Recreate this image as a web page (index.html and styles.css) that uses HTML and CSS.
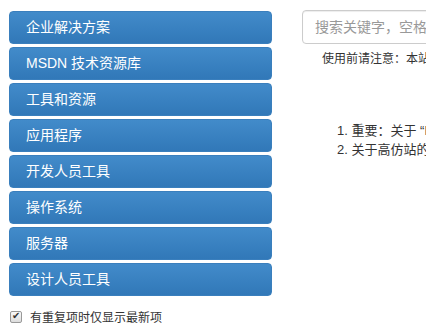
FILE: index.html
```html
<!DOCTYPE html>
<html lang="zh-CN">
<head>
    <meta charset="UTF-8">
    <title>MSDN 资源</title>
    <link rel="stylesheet" href="styles.css">
</head>
<body>
    <div class="page">
        <aside class="sidebar">
            <ul class="category-list">
                <li><a href="#" class="category">企业解决方案</a></li>
                <li><a href="#" class="category">MSDN 技术资源库</a></li>
                <li><a href="#" class="category">工具和资源</a></li>
                <li><a href="#" class="category">应用程序</a></li>
                <li><a href="#" class="category">开发人员工具</a></li>
                <li><a href="#" class="category">操作系统</a></li>
                <li><a href="#" class="category">服务器</a></li>
                <li><a href="#" class="category">设计人员工具</a></li>
            </ul>
            <label class="latest-only">
                <input type="checkbox" checked>
                <span>有重复项时仅显示最新项</span>
            </label>
        </aside>

        <main class="content">
            <input type="text" class="search" placeholder="搜索关键字，空格隔开多个关键字">
            <p class="notice">使用前请注意：本站资源均来自于官方原版，请校验文件信息后使用</p>
            <ol class="news">
                <li>重要：关于 “MSDN 镜像文件” 的说明</li>
                <li>关于高仿站的声明</li>
            </ol>
        </main>
    </div>
</body>
</html>
```

FILE: styles.css
```css
* {
    margin: 0;
    padding: 0;
    box-sizing: border-box;
}

body {
    font-family: "Liberation Sans", "Noto Sans CJK SC", sans-serif;
    color: #333;
    background-color: #fff;
    overflow: hidden;
}

.page {
    display: flex;
    align-items: flex-start;
    width: 800px;
}

.sidebar {
    width: 272px;
    padding: 11px 0 0 9px;
    flex-shrink: 0;
}

.category-list {
    list-style: none;
}

.category-list li {
    margin-bottom: 3px;
}

.category {
    display: block;
    height: 33px;
    line-height: 31px;
    padding-left: 16px;
    color: #fff;
    font-size: 14px;
    text-decoration: none;
    background: linear-gradient(to bottom, #428bca 0, #3178b8 100%);
    border: 1px solid #3a7fbd;
    border-radius: 4px;
}

.latest-only {
    display: flex;
    align-items: center;
    margin-top: 12px;
    font-size: 12px;
    color: #333;
}

.latest-only input {
    appearance: none;
    position: relative;
    width: 12px;
    height: 12px;
    margin: 0 8px 0 1px;
    border: 1px solid #999;
    border-radius: 2px;
    background: linear-gradient(to bottom, #fafafa, #dcdcdc);
}

.latest-only input:checked::after {
    content: "✔";
    position: absolute;
    left: 1px;
    top: -2px;
    font-size: 10px;
    color: #333;
}

.content {
    margin-left: 30px;
    padding-top: 10px;
    width: 420px;
    flex-shrink: 0;
}

.search {
    display: block;
    width: 100%;
    height: 34px;
    padding: 0 12px;
    font-family: inherit;
    font-size: 14px;
    color: #555;
    border: 1px solid #ccc;
    border-radius: 4px;
    box-shadow: inset 0 1px 1px rgba(0,0,0,0.075);
}

.search::placeholder {
    color: #999;
}

.notice {
    margin: 7px 0 0 20px;
    font-size: 12px;
    line-height: 17px;
    white-space: nowrap;
}

.news {
    margin: 53px 0 0 35px;
    padding-left: 0;
    list-style-position: inside;
    font-size: 13px;
    line-height: 19px;
    white-space: nowrap;
}
```
